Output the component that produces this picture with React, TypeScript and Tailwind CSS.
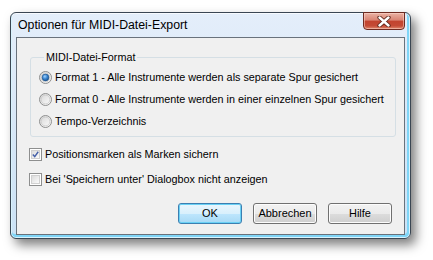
import React from "react";

const font = { fontFamily: '"Liberation Sans", Arial, sans-serif' };

const Radio = ({ checked }: { checked?: boolean }) => (
  <svg width="13" height="13" viewBox="0 0 13 13" className="shrink-0">
    <defs>
      <linearGradient id="rbg" x1="0" y1="0" x2="1" y2="1">
        <stop offset="0" stopColor="#d4d4d4" />
        <stop offset="1" stopColor="#ffffff" />
      </linearGradient>
      <radialGradient id="rdot" cx="0.4" cy="0.35" r="0.7">
        <stop offset="0" stopColor="#9fd3ff" />
        <stop offset="0.5" stopColor="#3a85d0" />
        <stop offset="1" stopColor="#164f8c" />
      </radialGradient>
    </defs>
    <circle cx="6.5" cy="6.5" r="6" fill="url(#rbg)" stroke="#8e8f8f" />
    <circle cx="6.5" cy="6.5" r="4.4" fill="none" stroke="#c8c8c8" strokeWidth="0.8" />
    {checked && <circle cx="6.5" cy="6.5" r="3.4" fill="url(#rdot)" stroke="#1b4f86" strokeWidth="0.6" />}
  </svg>
);

const Checkbox = ({ checked }: { checked?: boolean }) => (
  <span className="flex h-[13px] w-[13px] shrink-0 items-center justify-center border border-[#8e8f8f] bg-white">
    <span className="flex h-[9px] w-[9px] items-center justify-center border border-[#d0d0d0] bg-gradient-to-br from-[#dcdcdc] to-[#fbfbfb]">
      {checked && (
        <svg width="9" height="9" viewBox="0 0 9 9">
          <path d="M1 4.5 L3.5 7.2 L8 1" fill="none" stroke="#4560a8" strokeWidth="1.8" />
        </svg>
      )}
    </span>
  </span>
);

const Button = ({ label, def }: { label: string; def?: boolean }) => (
  <button
    className={
      "flex h-[21px] w-[64px] items-center justify-center rounded-[3px] border text-[11px] text-black " +
      (def
        ? "border-[#3c7fb1] bg-[linear-gradient(#eaf6fd_0%,#d9f0fc_50%,#bee6fd_51%,#a7d9f5_100%)] shadow-[inset_0_0_0_1px_#6ad1f5]"
        : "border-[#707070] bg-[linear-gradient(#f2f2f2_0%,#ebebeb_50%,#dddddd_51%,#cfcfcf_100%)] shadow-[inset_0_0_0_1px_#fcfcfc]")
    }
    style={font}
  >
    {label}
  </button>
);

export default function App() {
  return (
    <div className="h-[260px] w-[433px] bg-white pl-[10px] pt-[12px]">
      <div className="flex h-[227px] w-[401px] flex-col rounded-[6px] border border-[#3a4653] bg-[linear-gradient(#e4eefa_0%,#dae8f7_40%,#cbe2f5_100%)] px-[5px] pb-[3px] shadow-[5px_6px_11px_rgba(0,0,0,0.5),inset_0_0_0_1px_rgba(255,255,255,0.7),inset_-1px_-2px_0_2px_#7fd5f7]">
        <div className="flex h-[24px] items-start justify-between">
          <span className="pl-[2px] pt-[4px] text-[12.3px] leading-[16px] text-black" style={font}>
            Optionen für MIDI-Datei-Export
          </span>
          <div className="-mt-px flex h-[18px] w-[42px] items-center justify-center rounded-b-[4px] border border-[#6e2a20] bg-[linear-gradient(#eab2a4_0%,#d98473_45%,#c2432f_50%,#c44a35_80%,#e08a70_100%)] shadow-[inset_0_0_0_1px_rgba(255,220,210,0.5)]">
            <svg width="14" height="11" viewBox="0 0 14 11">
              <path d="M2.5 1.5 L11.5 9.5 M11.5 1.5 L2.5 9.5" stroke="#5a2418" strokeWidth="4.2" strokeLinecap="round" />
              <path d="M2.5 1.5 L11.5 9.5 M11.5 1.5 L2.5 9.5" stroke="#ffffff" strokeWidth="2.4" strokeLinecap="round" />
            </svg>
          </div>
        </div>
        <div className="flex flex-1 flex-col border border-[#69727c] bg-[#f0f0f0] pt-[12px] text-[10.8px] text-black" style={font}>
          <fieldset className="ml-[13px] mr-[8px] rounded-[3px] border border-[#d5dfe5] pb-[4px] pl-[8px] pt-[2px]">
            <legend className="ml-[5px] px-[2px] leading-[14px]">MIDI-Datei-Format</legend>
            {[
              "Format 1 - Alle Instrumente werden als separate Spur gesichert",
              "Format 0 - Alle Instrumente werden in einer einzelnen Spur gesichert",
              "Tempo-Verzeichnis",
            ].map((t, i) => (
              <div key={t} className="flex h-[22px] items-center gap-[3px]">
                <Radio checked={i === 0} />
                <span>{t}</span>
              </div>
            ))}
          </fieldset>
          <div className="ml-[12px] mt-[7px] flex h-[20px] items-center gap-[3px]">
            <Checkbox checked />
            <span>Positionsmarken als Marken sichern</span>
          </div>
          <div className="ml-[12px] mt-[5px] flex h-[20px] items-center gap-[3px]">
            <Checkbox />
            <span>Bei 'Speichern unter' Dialogbox nicht anzeigen</span>
          </div>
          <div className="mr-[12px] mt-[14px] flex justify-end gap-[11px]">
            <Button label="OK" def />
            <Button label="Abbrechen" />
            <Button label="Hilfe" />
          </div>
        </div>
      </div>
    </div>
  );
}
